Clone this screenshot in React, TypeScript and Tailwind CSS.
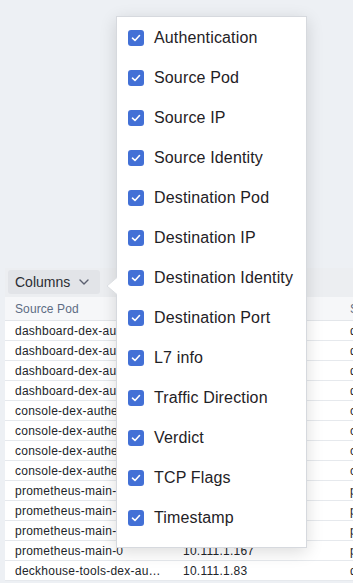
import React from "react";

const items = [
  "Authentication",
  "Source Pod",
  "Source IP",
  "Source Identity",
  "Destination Pod",
  "Destination IP",
  "Destination Identity",
  "Destination Port",
  "L7 info",
  "Traffic Direction",
  "Verdict",
  "TCP Flags",
  "Timestamp",
];

const rows: [string, string, string][] = [
  ["dashboard-dex-authenticator-0", "10.111.0.42", "dashboard"],
  ["dashboard-dex-authenticator-1", "10.111.0.43", "dashboard"],
  ["dashboard-dex-authenticator-2", "10.111.1.21", "dashboard"],
  ["dashboard-dex-authenticator-3", "10.111.1.22", "dashboard"],
  ["console-dex-authenticator-0", "10.111.0.57", "console"],
  ["console-dex-authenticator-1", "10.111.0.58", "console"],
  ["console-dex-authenticator-2", "10.111.1.64", "console"],
  ["console-dex-authenticator-3", "10.111.1.65", "console"],
  ["prometheus-main-1", "10.111.0.131", "prometheus"],
  ["prometheus-main-1", "10.111.0.131", "prometheus"],
  ["prometheus-main-1", "10.111.0.131", "prometheus"],
  ["prometheus-main-0", "10.111.1.167", "prometheus"],
  ["deckhouse-tools-dex-authenticator-0", "10.111.1.83", "deckhouse"],
];

function Check() {
  return (
    <span className="flex h-[16px] w-[16px] shrink-0 items-center justify-center rounded-[3px] bg-[#4270d6]">
      <svg width="10" height="8" viewBox="0 0 10 8" fill="none">
        <path d="M1.5 4.2 L4 6.5 L8.5 1.5" stroke="white" strokeWidth="1.6" strokeLinecap="round" strokeLinejoin="round" />
      </svg>
    </span>
  );
}

export default function App() {
  return (
    <div
      className="relative flex h-[583px] w-[353px] flex-col overflow-hidden bg-[#edf0f4]"
      style={{ fontFamily: '"Liberation Sans", Arial, sans-serif' }}
    >
      <div className="h-[268px] shrink-0" />
      <div className="ml-[5px] flex flex-col">
        <div className="flex h-[29px] items-start bg-[#eceef1] pl-[3px] pt-[2px]">
          <button className="flex h-[24px] w-[92px] items-center gap-[9px] rounded-[3px] bg-[#e2e4e8] pl-[7px] text-[14px] text-[#2a2d33]">
            <span>Columns</span>
            <svg width="10" height="6" viewBox="0 0 10 6" fill="none">
              <path d="M1 1 L5 5 L9 1" stroke="#5b6070" strokeWidth="1.4" strokeLinecap="round" strokeLinejoin="round" />
            </svg>
          </button>
        </div>
        <div className="flex h-[24px] items-center border-b border-[#e3e6ea] bg-[#f6f7f9] text-[12px] tracking-[0.1px] text-[#5d6c84]">
          <div className="w-[168px] shrink-0 px-[10px]">Source Pod</div>
          <div className="w-[167px] shrink-0 px-[10px]">Source IP</div>
          <div className="shrink-0 px-[10px] whitespace-nowrap">Source Identity</div>
        </div>
        {rows.map((r, i) => (
          <div
            key={i}
            className="flex h-[20px] items-center border-b border-[#e6e9ed] bg-white text-[12px] tracking-[0.25px] text-[#22252a]"
          >
            <div className="w-[168px] shrink-0 truncate px-[10px]">{r[0]}</div>
            <div className="w-[167px] shrink-0 truncate px-[10px]">{r[1]}</div>
            <div className="shrink-0 whitespace-nowrap px-[10px]">{r[2]}</div>
          </div>
        ))}
      </div>

      <div className="absolute left-[116px] top-[16px] w-[191px] border border-[#d6d9de] bg-white pb-[9px] pt-[1px] shadow-[0_4px_16px_rgba(0,0,0,0.14)]">
        <svg
          className="absolute left-[-11px] top-[260px]"
          width="12"
          height="18"
          viewBox="0 0 12 18"
        >
          <path d="M11 0.5 L1 9 L11 17.5" fill="white" stroke="#dcdfe3" strokeWidth="1" />
          <rect x="11" y="0" width="1" height="18" fill="white" />
        </svg>
        {items.map((it) => (
          <div key={it} className="flex h-[40px] items-center gap-[10px] pl-[11px] text-[16px] tracking-[0.15px] text-[#1f2226]">
            <Check />
            <span>{it}</span>
          </div>
        ))}
      </div>
    </div>
  );
}
